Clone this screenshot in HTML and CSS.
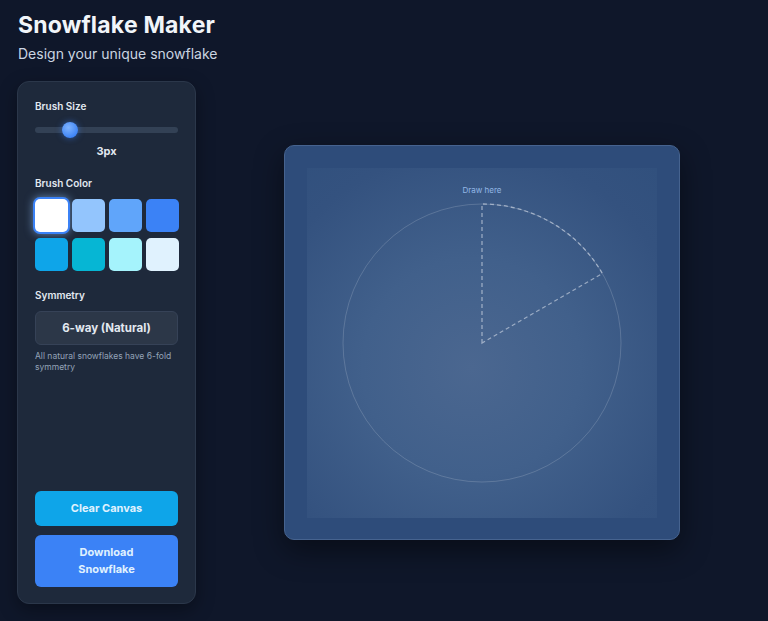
FILE: index.html
```html
<!DOCTYPE html>
<html lang="en">
<head>
<meta charset="utf-8">
<title>Snowflake Maker</title>
<link rel="stylesheet" href="styles.css">
</head>
<body>
<header class="header">
  <h1 class="title">Snowflake Maker</h1>
  <p class="subtitle">Design your unique snowflake</p>
</header>
<div class="layout">
  <aside class="panel">
    <section class="group">
      <label class="label">Brush Size</label>
      <div class="slider"><div class="track"></div><div class="thumb"></div></div>
      <div class="size-value">3px</div>
    </section>
    <section class="group group-color">
      <label class="label">Brush Color</label>
      <div class="swatches">
        <span class="swatch selected sw-white"></span>
        <span class="swatch sw-1"></span>
        <span class="swatch sw-2"></span>
        <span class="swatch sw-3"></span>
        <span class="swatch sw-4"></span>
        <span class="swatch sw-5"></span>
        <span class="swatch sw-6"></span>
        <span class="swatch sw-7"></span>
      </div>
    </section>
    <section class="group group-sym">
      <label class="label">Symmetry</label>
      <div class="select">6-way (Natural)</div>
      <p class="help">All natural snowflakes have 6-fold symmetry</p>
    </section>
    <div class="actions">
      <button class="btn btn-clear">Clear Canvas</button>
      <button class="btn btn-download">Download Snowflake</button>
    </div>
  </aside>
  <main class="stage">
    <div class="canvas-wrap">
      <div class="canvas">
        <svg class="guide" width="350" height="350" viewBox="0 0 350 350">
          <text x="175" y="25" text-anchor="middle" class="hint">Draw here</text>
          <circle cx="175" cy="175" r="139" fill="none" stroke="rgba(255,255,255,0.16)" stroke-width="1"/>
          <path d="M175 175 L175 36 A139 139 0 0 1 295.4 105.5 Z" fill="none" stroke="rgba(226,232,240,0.55)" stroke-width="1.3" stroke-dasharray="4 3"/>
        </svg>
      </div>
    </div>
  </main>
</div>
</body>
</html>
```

FILE: styles.css
```css
* { box-sizing: border-box; }
html, body { margin: 0; padding: 0; }
body {
  background: #0f172a;
  color: #e2e8f0;
  font-family: "Inter", "Noto Sans", sans-serif;
  width: 768px;
  height: 621px;
  overflow: hidden;
  padding: 10px 17px 17px 17px;
}
.header { margin: 0 0 0 1px; }
.title {
  margin: 0;
  font-size: 23px;
  line-height: 30px;
  font-weight: 700;
  color: #f1f5f9;
  letter-spacing: 0.2px;
}
.subtitle {
  margin: 5px 0 0 0;
  font-size: 14px;
  line-height: 18px;
  color: #cbd5e1;
}
.layout {
  display: flex;
  gap: 16px;
  margin-top: 18px;
  height: 523px;
}
.panel {
  width: 179px;
  flex: none;
  background: #1e293b;
  border: 1px solid #2b374a;
  border-radius: 12px;
  padding: 17px 17px 16px 17px;
  display: flex;
  flex-direction: column;
  box-shadow: 0 6px 18px rgba(0,0,0,0.35);
}
.group { display: flex; flex-direction: column; }
.label {
  font-size: 10px;
  font-weight: 600;
  color: #e2e8f0;
  line-height: 14px;
}
.slider {
  position: relative;
  height: 16px;
  margin-top: 9px;
}
.track {
  position: absolute;
  left: 0; right: 0; top: 5px;
  height: 6px;
  border-radius: 3px;
  background: #334155;
}
.thumb {
  position: absolute;
  left: 27px; top: 0;
  width: 16px; height: 16px;
  border-radius: 50%;
  background: radial-gradient(circle at 40% 35%, #7fb4ff, #3b82f6 75%);
  box-shadow: 0 0 6px rgba(59,130,246,0.6);
}
.size-value {
  text-align: center;
  font-size: 11px;
  font-weight: 700;
  margin-top: 6px;
  line-height: 14px;
}
.group-color { margin-top: 18px; }
.group-sym { margin-top: 17px; }
.swatches {
  display: grid;
  grid-template-columns: repeat(4, 33px);
  grid-auto-rows: 33px;
  column-gap: 4px;
  row-gap: 6px;
  margin-top: 9px;
}
.swatch { border-radius: 5px; display: block; }
.selected { box-shadow: 0 0 0 2px #3b82f6, 0 0 8px 2px rgba(147,197,253,0.6); }
.sw-white { background: #ffffff; }
.sw-1 { background: #93c5fd; }
.sw-2 { background: #60a5fa; }
.sw-3 { background: #3b82f6; }
.sw-4 { background: #0ea5e9; }
.sw-5 { background: #06b6d4; }
.sw-6 { background: #a5f3fc; }
.sw-7 { background: #e0f2fe; }
.select {
  margin-top: 9px;
  height: 34px;
  border-radius: 6px;
  background: #2c3748;
  border: 1px solid #364257;
  display: flex;
  align-items: center;
  justify-content: center;
  font-size: 11.5px;
  font-weight: 700;
  color: #e2e8f0;
}
.help {
  margin: 6px 0 0 0;
  font-size: 8.5px;
  line-height: 11px;
  color: #94a3b8;
}
.actions {
  margin-top: auto;
  display: flex;
  flex-direction: column;
  gap: 9px;
}
.btn {
  border: none;
  border-radius: 6px;
  font-family: inherit;
  font-size: 11px;
  font-weight: 700;
  color: #e0f2fe;
  line-height: 17px;
  padding: 0 24px;
}
.btn-clear { background: #0ea5e9; height: 35px; }
.btn-download { background: #3b82f6; height: 52px; }
.stage {
  flex: 1;
  display: flex;
  align-items: center;
  justify-content: center;
}
.canvas-wrap {
  width: 396px;
  height: 395px;
  padding: 22px;
  border-radius: 10px;
  border: 1px solid #46638f;
  background: #2e4c7a;
  box-shadow: 0 10px 30px rgba(0,0,0,0.45);
}
.canvas {
  width: 350px;
  height: 350px;
  background: radial-gradient(circle at 47% 57%, #4b6790 0%, #41608b 40%, #34527f 80%, #31507d 100%);
}
.guide { display: block; }
.hint {
  font-family: "Inter", sans-serif;
  font-size: 8px;
  fill: #93b7e6;
}
```
